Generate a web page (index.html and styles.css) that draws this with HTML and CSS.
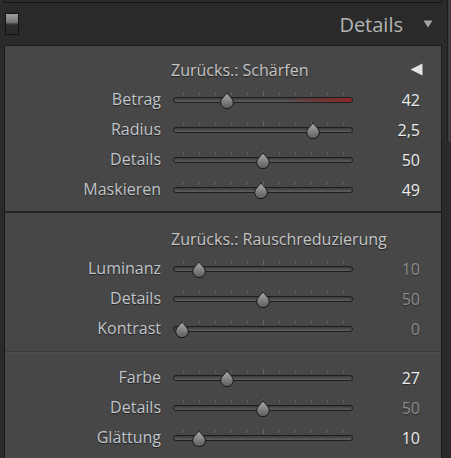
FILE: index.html
```html
<!DOCTYPE html>
<html>
<head>
<meta charset="utf-8">
<link rel="stylesheet" href="styles.css">
</head>
<body>
<svg class="defs" width="0" height="0" aria-hidden="true">
  <defs>
    <linearGradient id="tg" x1="0" y1="0" x2="0" y2="1">
      <stop offset="0" stop-color="#b0b0b0"/>
      <stop offset="0.55" stop-color="#808080"/>
      <stop offset="1" stop-color="#5a5a5a"/>
    </linearGradient>
    <symbol id="thumb" viewBox="0 0 14 17">
      <path d="M7 0.6 C7.8 3.2 13.3 6.3 13.3 10.4 A6.3 6.3 0 0 1 0.7 10.4 C0.7 6.3 6.2 3.2 7 0.6 Z" fill="url(#tg)" stroke="#141414" stroke-width="1"/>
    </symbol>
  </defs>
</svg>
<div class="app">
  <div class="main">
    <div class="prev"></div>
    <div class="hdr">
      <div class="toggle"></div>
      <div class="title">Details</div>
      <svg class="down" width="10" height="8" viewBox="0 0 10 8"><path d="M0.5 0.5 H9.5 L5 7.5 Z" fill="#a3a3a3"/></svg>
    </div>
    <div class="panel">
      <div class="section s1">
        <div class="shead">
          <span class="stitle">Zurücks.: Schärfen</span>
          <svg class="left" width="13" height="13" viewBox="0 0 13 13"><path d="M12.5 0.5 V12.5 L0.5 6.5 Z" fill="#e4e4e4"/></svg>
        </div>
        <div class="row">
          <div class="label">Betrag</div>
          <div class="slider"><div class="track red"></div><div class="ticks"></div><div class="tick-mid"></div><svg class="thumb" style="left:47px" width="14" height="17"><use href="#thumb"/></svg></div>
          <div class="value">42</div>
        </div>
        <div class="row">
          <div class="label">Radius</div>
          <div class="slider"><div class="track"></div><div class="ticks"></div><div class="tick-mid"></div><svg class="thumb" style="left:133px" width="14" height="17"><use href="#thumb"/></svg></div>
          <div class="value">2,5</div>
        </div>
        <div class="row">
          <div class="label">Details</div>
          <div class="slider"><div class="track"></div><div class="ticks"></div><div class="tick-mid"></div><svg class="thumb" style="left:83px" width="14" height="17"><use href="#thumb"/></svg></div>
          <div class="value">50</div>
        </div>
        <div class="row">
          <div class="label">Maskieren</div>
          <div class="slider"><div class="track"></div><div class="ticks"></div><div class="tick-mid"></div><svg class="thumb" style="left:81px" width="14" height="17"><use href="#thumb"/></svg></div>
          <div class="value">49</div>
        </div>
      </div>
      <div class="section s2">
        <div class="shead">
          <span class="stitle">Zurücks.: Rauschreduzierung</span>
        </div>
        <div class="row">
          <div class="label">Luminanz</div>
          <div class="slider"><div class="track"></div><div class="ticks"></div><div class="tick-mid"></div><svg class="thumb" style="left:19px" width="14" height="17"><use href="#thumb"/></svg></div>
          <div class="value dim">10</div>
        </div>
        <div class="row">
          <div class="label">Details</div>
          <div class="slider"><div class="track"></div><div class="ticks"></div><div class="tick-mid"></div><svg class="thumb" style="left:83px" width="14" height="17"><use href="#thumb"/></svg></div>
          <div class="value dim">50</div>
        </div>
        <div class="row">
          <div class="label">Kontrast</div>
          <div class="slider"><div class="track"></div><div class="ticks"></div><div class="tick-mid"></div><svg class="thumb" style="left:2px" width="14" height="17"><use href="#thumb"/></svg></div>
          <div class="value dim">0</div>
        </div>
      </div>
      <div class="section s3">
        <div class="row">
          <div class="label">Farbe</div>
          <div class="slider"><div class="track"></div><div class="ticks"></div><div class="tick-mid"></div><svg class="thumb" style="left:47px" width="14" height="17"><use href="#thumb"/></svg></div>
          <div class="value">27</div>
        </div>
        <div class="row">
          <div class="label">Details</div>
          <div class="slider"><div class="track"></div><div class="ticks"></div><div class="tick-mid"></div><svg class="thumb" style="left:83px" width="14" height="17"><use href="#thumb"/></svg></div>
          <div class="value dim">50</div>
        </div>
        <div class="row">
          <div class="label">Glättung</div>
          <div class="slider"><div class="track"></div><div class="ticks"></div><div class="tick-mid"></div><svg class="thumb" style="left:19px" width="14" height="17"><use href="#thumb"/></svg></div>
          <div class="value">10</div>
        </div>
      </div>
    </div>
  </div>
  <div class="scroll"><div class="sthumb"></div></div>
</div>
</body>
</html>
```
FILE: styles.css
```css
html, body {
  margin: 0;
  padding: 0;
}
body {
  background: #2a2a2a;
  font-family: "Open Sans", "Noto Sans", sans-serif;
  width: 451px;
  height: 458px;
  overflow: hidden;
}
.defs {
  position: absolute;
  width: 0;
  height: 0;
}
.app {
  display: flex;
  height: 458px;
}
.main {
  width: 443px;
  flex: none;
}
.prev {
  margin-left: 4px;
  width: 436px;
  height: 2px;
  border: 1px solid #161616;
  border-top: 0;
}
.hdr {
  height: 42px;
  display: flex;
  align-items: flex-start;
}
.toggle {
  margin-left: 5px;
  margin-top: 10px;
  width: 12px;
  height: 20px;
  border: 1px solid #121212;
  background: linear-gradient(#a0a0a0 0, #747474 42%, #3c3c3c 50%, #2c2c2c 58%, #2a2a2a 100%);
}
.title {
  margin-left: auto;
  margin-top: 10px;
  font-size: 20px;
  line-height: 24px;
  color: #b3b3b3;
}
.down {
  margin-left: 20px;
  margin-right: 10px;
  margin-top: 17px;
}
.panel {
  margin-left: 4px;
  width: 436px;
  border: 1px solid #1b1b1b;
  border-bottom: 0;
  background: #474747;
  height: 420px;
}
.section.s1 {
  padding-top: 9px;
  padding-bottom: 6px;
  border-bottom: 2px solid #252525;
}
.section.s2 {
  padding-top: 11px;
  padding-bottom: 7px;
  border-bottom: 1px solid #3b3b3b;
}
.section.s3 {
  padding-top: 10px;
  border-top: 1px solid #4d4d4d;
}
.shead {
  height: 30px;
  display: flex;
  align-items: center;
  padding-left: 166px;
  padding-right: 18px;
}
.stitle {
  font-size: 16px;
  line-height: 30px;
  color: #c6c6c6;
  text-shadow: 0 1px 1px rgba(0,0,0,0.55);
}
.left {
  margin-left: auto;
  margin-top: -1px;
}
.row {
  height: 30px;
  display: grid;
  grid-template-columns: 156px 180px 55px;
  column-gap: 12px;
}
.label {
  text-align: right;
  font-size: 16px;
  line-height: 28px;
  color: #c0c5ca;
  text-shadow: 0 1px 1px rgba(0,0,0,0.55);
}
.value {
  text-align: right;
  font-size: 16px;
  line-height: 30px;
  color: #ededed;
  text-shadow: 0 1px 1px rgba(0,0,0,0.4);
}
.value.dim {
  color: #8c8c8c;
}
.slider {
  position: relative;
  height: 30px;
}
.track {
  position: absolute;
  left: 0;
  right: 0;
  top: 12px;
  height: 4px;
  border: 1px solid #1e1e1e;
  border-radius: 3px;
  background: linear-gradient(#3a3a3a, #5f5f5f);
}
.track.red {
  background: linear-gradient(to right, rgba(0,0,0,0) 62%, rgba(130,40,40,0.7) 85%, rgba(145,38,38,0.95) 100%), linear-gradient(#3a3a3a, #5f5f5f);
}
.ticks {
  position: absolute;
  left: 10px;
  top: 7px;
  width: 161px;
  height: 3px;
  background: repeating-linear-gradient(to right, #5f5f5f 0, #5f5f5f 1px, transparent 1px, transparent 16px);
}
.tick-mid {
  position: absolute;
  left: 90px;
  top: 6px;
  width: 1px;
  height: 5px;
  background: #666;
}
.thumb {
  position: absolute;
  top: 7px;
}
.scroll {
  flex: none;
  width: 8px;
  display: flex;
  justify-content: flex-end;
}
.sthumb {
  width: 3px;
  height: 142px;
  border-left: 1px solid #1c1c1c;
  background: #3c3c3c;
}
```
